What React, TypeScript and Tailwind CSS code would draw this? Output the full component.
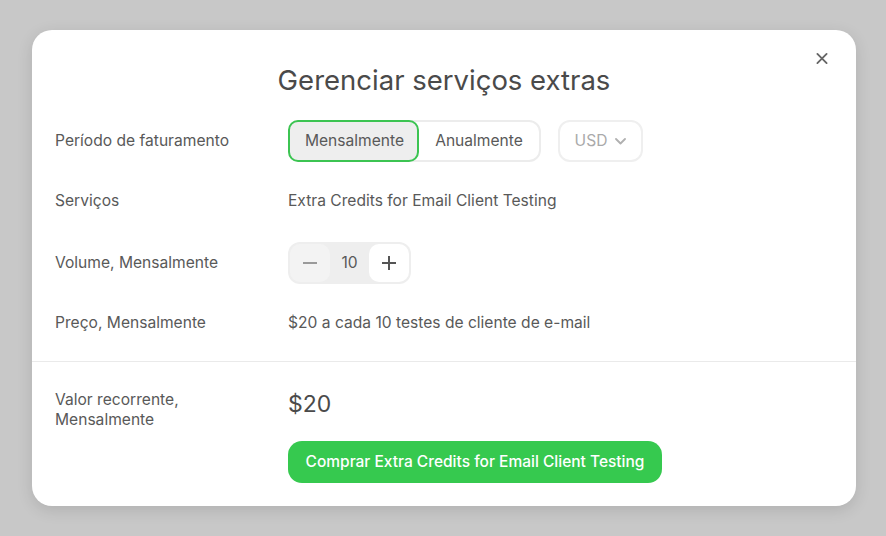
import React from "react";

export default function App() {
  const font = { fontFamily: "Inter, 'Noto Sans', sans-serif" };
  return (
    <div className="h-[536px] w-[886px] bg-[#c8c8c8] pt-[30px] pl-[32px]" style={font}>
      <div className="relative w-[824px] h-[476px] rounded-[20px] bg-white shadow-[0_4px_16px_rgba(0,0,0,0.12)] flex flex-col">
        <button className="absolute right-[28px] top-[22px] w-[12px] h-[12px] flex items-center justify-center">
          <svg width="13" height="13" viewBox="0 0 13 13" fill="none">
            <path d="M1.5 1.5L11.5 11.5M11.5 1.5L1.5 11.5" stroke="#666" strokeWidth="2" strokeLinecap="round" />
          </svg>
        </button>
        <h1 className="pt-[34px] text-center text-[27.5px] leading-[32px] text-[#4a4a4a] font-normal">
          Gerenciar serviços extras
        </h1>
        <div className="mt-[24px] px-[23px] flex flex-col gap-[18px] text-[15.6px] text-[#595959]">
          <div className="flex items-center h-[42px]">
            <div className="w-[233px]">Período de faturamento</div>
            <div className="flex items-center gap-[17px]">
              <div className="flex h-[42px] w-[253px] rounded-[12px] border-2 border-[#ececec] items-stretch">
                <div className="-m-[2px] mr-0 w-[131px] rounded-[10px] border-2 border-[#3cc452] bg-[#eeeeee] flex items-center justify-center pl-[2px]">
                  Mensalmente
                </div>
                <div className="flex-1 flex items-center justify-center">Anualmente</div>
              </div>
              <div className="h-[42px] w-[85px] rounded-[12px] border-2 border-[#efefef] flex items-center justify-center gap-[8px] text-[#aaa]">
                <span>USD</span>
                <svg width="11" height="7" viewBox="0 0 11 7" fill="none">
                  <path d="M1 1L5.5 5.5L10 1" stroke="#b0b0b0" strokeWidth="1.8" strokeLinecap="round" strokeLinejoin="round" />
                </svg>
              </div>
            </div>
          </div>
          <div className="flex items-center h-[42px]">
            <div className="w-[233px]">Serviços</div>
            <div>Extra Credits for Email Client Testing</div>
          </div>
          <div className="flex items-center h-[42px] mt-[2px]">
            <div className="w-[233px]">Volume, Mensalmente</div>
            <div className="flex items-center h-[42px] w-[123px] rounded-[12px] bg-[#eeeeee] p-[2px]">
              <div className="w-[40px] h-[38px] rounded-[10px] bg-[#f3f3f3] flex items-center justify-center">
                <svg width="14" height="2" viewBox="0 0 14 2"><path d="M0 1H14" stroke="#9a9a9a" strokeWidth="2" /></svg>
              </div>
              <div className="flex-1 text-center">10</div>
              <div className="w-[40px] h-[38px] rounded-[10px] bg-white flex items-center justify-center">
                <svg width="14" height="14" viewBox="0 0 14 14"><path d="M0 7H14M7 0V14" stroke="#555" strokeWidth="2" /></svg>
              </div>
            </div>
          </div>
          <div className="flex items-center h-[42px]">
            <div className="w-[233px]">Preço, Mensalmente</div>
            <div>$20 a cada 10 testes de cliente de e-mail</div>
          </div>
        </div>
        <div className="mt-[17px] border-t border-[#eaeaea] px-[23px] pt-[28px] flex text-[#595959]">
          <div className="w-[233px] text-[15.6px] leading-[20px]">
            Valor recorrente,
            <br />
            Mensalmente
          </div>
          <div className="flex flex-col">
            <div className="text-[23px] leading-[28px] text-[#4a4a4a]">$20</div>
            <button className="mt-[23px] h-[42px] w-[374px] rounded-[14px] bg-[#36c94f] text-white text-[15.5px] font-medium">
              Comprar Extra Credits for Email Client Testing
            </button>
          </div>
        </div>
      </div>
    </div>
  );
}
